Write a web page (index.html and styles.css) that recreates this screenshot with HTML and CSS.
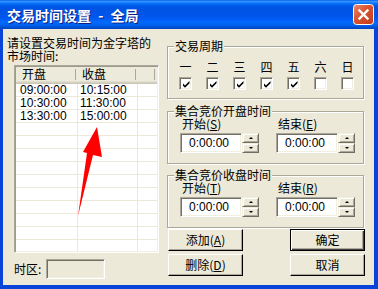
FILE: index.html
```html
<!DOCTYPE html>
<html lang="zh-CN">

<head>
  <meta charset="utf-8">
  <title>交易时间设置 - 全局</title>
  <link rel="stylesheet" href="styles.css">
</head>

<body>
  <div class="window">
    <div class="titlebar">
      <span class="title">交易时间设置 - 全局</span>
      <span class="close">
        <svg width="21" height="21" viewBox="0 0 21 21">
          <defs>
            <linearGradient id="closebg" x1="0" y1="0" x2="1" y2="1">
              <stop offset="0" stop-color="#EA8A70"/>
              <stop offset="0.45" stop-color="#D9532E"/>
              <stop offset="1" stop-color="#C23B1B"/>
            </linearGradient>
          </defs>
          <rect x="0.5" y="0.5" width="20" height="20" rx="3" fill="url(#closebg)" stroke="#fff"/>
          <path d="M6.5 6.5 L14.5 14.5 M14.5 6.5 L6.5 14.5" stroke="#fff" stroke-width="2.4" stroke-linecap="square"/>
        </svg>
      </span>
    </div>

    <div class="dialog">
      <div class="left">
        <p class="intro">请设置交易时间为金字塔的<br>市场时间:</p>

        <div class="list">
          <div class="list-head">
            <span>开盘</span><span>收盘</span><span></span>
          </div>
          <div class="list-body">
            <span>09:00:00</span><span>10:15:00</span><span></span>
            <span>10:30:00</span><span>11:30:00</span><span></span>
            <span>13:30:00</span><span>15:00:00</span><span></span>
            <span></span><span></span><span></span>
            <span></span><span></span><span></span>
            <span></span><span></span><span></span>
            <span></span><span></span><span></span>
            <span></span><span></span><span></span>
            <span></span><span></span><span></span>
            <span></span><span></span><span></span>
            <span></span><span></span><span></span>
            <span></span><span></span><span></span>
            <span></span><span></span><span></span>
          </div>
        </div>

        <div class="zone">
          <span>时区:</span>
          <span class="zone-box"></span>
        </div>
      </div>

      <div class="right">
        <div class="group">
          <div class="group-title">交易周期</div>
          <div class="days">
            <span>一</span><span>二</span><span>三</span><span>四</span><span>五</span><span>六</span><span>日</span>
            <span class="check"><svg width="9" height="9" viewBox="0 0 9 9"><path d="M1 3.5 L3 5.5 L7.5 1 L7.5 3.2 L3 7.7 L1 5.7 Z"/></svg></span>
            <span class="check"><svg width="9" height="9" viewBox="0 0 9 9"><path d="M1 3.5 L3 5.5 L7.5 1 L7.5 3.2 L3 7.7 L1 5.7 Z"/></svg></span>
            <span class="check"><svg width="9" height="9" viewBox="0 0 9 9"><path d="M1 3.5 L3 5.5 L7.5 1 L7.5 3.2 L3 7.7 L1 5.7 Z"/></svg></span>
            <span class="check"><svg width="9" height="9" viewBox="0 0 9 9"><path d="M1 3.5 L3 5.5 L7.5 1 L7.5 3.2 L3 7.7 L1 5.7 Z"/></svg></span>
            <span class="check"><svg width="9" height="9" viewBox="0 0 9 9"><path d="M1 3.5 L3 5.5 L7.5 1 L7.5 3.2 L3 7.7 L1 5.7 Z"/></svg></span>
            <span class="check"></span>
            <span class="check"></span>
          </div>
        </div>

        <div class="group group-time">
          <div class="group-title">集合竞价开盘时间</div>
          <div class="times">
            <div class="field">
              <label>开始(<u>S</u>)</label>
              <div class="spinbox">
                <span class="edit">0:00:00</span>
                <span class="spin"><span><i class="up"></i></span><span><i class="down"></i></span></span>
              </div>
            </div>
            <div class="field">
              <label>结束(<u>E</u>)</label>
              <div class="spinbox">
                <span class="edit">0:00:00</span>
                <span class="spin"><span><i class="up"></i></span><span><i class="down"></i></span></span>
              </div>
            </div>
          </div>
        </div>

        <div class="group group-time group-close">
          <div class="group-title">集合竞价收盘时间</div>
          <div class="times">
            <div class="field">
              <label>开始(<u>T</u>)</label>
              <div class="spinbox">
                <span class="edit">0:00:00</span>
                <span class="spin"><span><i class="up"></i></span><span><i class="down"></i></span></span>
              </div>
            </div>
            <div class="field">
              <label>结束(<u>R</u>)</label>
              <div class="spinbox">
                <span class="edit">0:00:00</span>
                <span class="spin"><span><i class="up"></i></span><span><i class="down"></i></span></span>
              </div>
            </div>
          </div>
        </div>

        <div class="buttons">
          <span class="btn">添加(<u>A</u>)</span>
          <span class="btn default">确定</span>
          <span class="btn">删除(<u>D</u>)</span>
          <span class="btn">取消</span>
        </div>
      </div>
    </div>

    <!-- red pointer drawn over the list -->
    <svg class="arrow" width="378" height="289" viewBox="0 0 378 289">
      <polygon points="97,127 102,157 93,155 78,216 87,153 83,152" fill="#ff0000"/>
    </svg>
  </div>
</body>

</html>
```

FILE: styles.css
```css
* {
  box-sizing: border-box;
}

html,
body {
  margin: 0;
}

body {
  width: 378px;
  height: 289px;
  overflow: hidden;
  font: 12px/14px "Noto Sans CJK SC", sans-serif;
  color: #000;
}

.window {
  position: relative;
  width: 378px;
  height: 289px;
  display: flex;
  flex-direction: column;
  background: #0844D8;
}

.titlebar {
  height: 29px;
  display: flex;
  align-items: center;
  padding: 0 4px 0 7px;
  background: linear-gradient(to bottom, #0058EE 0%, #3593FF 4%, #288EFF 7%, #127DFF 10%, #036FFC 13%, #0262EE 17%, #0057E5 22%, #0054E3 28%, #0055EB 56%, #005BF5 66%, #026AFE 76%, #0062EF 86%, #0052D6 93%, #0046C4 100%);
}

.title {
  color: #fff;
  font-size: 14px;
  font-weight: bold;
  line-height: 16px;
  word-spacing: 4px;
  text-shadow: 1px 1px 0 #0A1E86;
}

.close {
  margin-left: auto;
  width: 21px;
  height: 21px;
  display: block;
}

.close svg {
  display: block;
}

.dialog {
  flex: 1;
  margin: 0 4px 4px 3px;
  background: #ECE9D8;
  display: flex;
}

/* left side */
.left {
  width: 164px;
  padding: 7px 0 0 4px;
}

.intro {
  margin: 0;
  line-height: 13px;
}

.list {
  margin: 3px 0 0 7px;
  width: 145px;
  height: 188px;
  overflow: hidden;
  background: #fff;
  border: 1px solid;
  border-color: #ACA899 #fff #fff #ACA899;
  padding: 1px;
  box-shadow: inset 1px 1px 0 #9D9A8C, inset -1px -1px 0 #F1EFE2;
}

.list-head,
.list-body {
  display: grid;
  grid-template-columns: 62px 60px 1fr;
}

.list-head {
  height: 17px;
  background: #EBEADB;
  box-shadow: inset 0 -1px 0 #CBC7B8, inset 0 -2px 0 #D6D2C2, inset 0 -3px 0 #E2DECD;
}

.list-head span {
  padding-left: 6px;
  line-height: 14px;
  background: linear-gradient(#ACA899, #ACA899) right 2px top 2px / 1px 11px no-repeat;
}

.list-head span:nth-child(2) {
  padding-left: 4px;
}

.list-body span {
  height: 13px;
  padding-left: 4px;
  font: 12px/12px "Liberation Sans", sans-serif;
  border-bottom: 1px solid #ECE9D8;
}

.list-body span:nth-child(3n+1),
.list-body span:nth-child(3n+2) {
  border-right: 1px solid #ECE9D8;
}

.list-body span:nth-child(3n+2) {
  padding-left: 2px;
}

.zone {
  display: flex;
  align-items: center;
  gap: 5px;
  margin: 6px 0 0 7px;
}

.zone-box {
  width: 59px;
  height: 20px;
  border: 1px solid;
  border-color: #ACA899 #fff #fff #ACA899;
  box-shadow: inset 1px 1px 0 #716F64, inset -1px -1px 0 #F1EFE2;
}

/* right side */
.right {
  width: 207px;
  padding-top: 17px;
}

.group {
  width: 197px;
  border: 1px solid #ACA899;
  box-shadow: inset 1px 1px 0 #fff, 1px 1px 0 #fff;
}

.group-title {
  display: table;
  margin: -8px 0 0 6px;
  padding: 0 1px;
  line-height: 14px;
  background: #ECE9D8;
}

.group-time {
  margin-top: 12px;
}

.group-close {
  margin-top: 11px;
}

.days {
  display: grid;
  grid-template-columns: repeat(7, 27px);
  justify-items: center;
  row-gap: 3px;
  padding: 7px 0 8px 4px;
}

.check {
  width: 13px;
  height: 13px;
  display: flex;
  align-items: center;
  justify-content: center;
  background: #fff;
  border: 1px solid;
  border-color: #ACA899 #fff #fff #ACA899;
  box-shadow: inset 1px 1px 0 #716F64, inset -1px -1px 0 #F1EFE2;
}

.check svg {
  display: block;
  margin: 1px 0 0 1px;
}

.times {
  display: flex;
  gap: 17px;
  padding: 0 0 10px 12px;
}

.field label {
  display: block;
  padding-left: 2px;
  line-height: 12px;
  margin-bottom: 3px;
}

.spinbox {
  display: flex;
}

.edit {
  width: 62px;
  height: 20px;
  padding-left: 8px;
  font: 12px/18px "Liberation Sans", sans-serif;
  background: #fff;
  border: 1px solid;
  border-color: #ACA899 #fff #fff #ACA899;
  box-shadow: inset 1px 1px 0 #716F64, inset -1px -1px 0 #F1EFE2;
}

.spin {
  width: 17px;
  display: flex;
  flex-direction: column;
}

.spin span {
  height: 10px;
  display: flex;
  align-items: center;
  justify-content: center;
  background: #ECE9D8;
  border: 1px solid;
  border-color: #F1EFE2 #716F64 #716F64 #F1EFE2;
  box-shadow: inset 1px 1px 0 #fff, inset -1px -1px 0 #ACA899;
}

.up,
.down {
  width: 0;
  height: 0;
  border-left: 2px solid transparent;
  border-right: 2px solid transparent;
}

.up {
  border-bottom: 2px solid #000;
}

.down {
  border-top: 2px solid #000;
}

.buttons {
  display: grid;
  grid-template-columns: 75px 75px;
  column-gap: 47px;
  row-gap: 3px;
  margin-top: 1px;
  padding-left: 1px;
}

.btn {
  height: 22px;
  display: flex;
  align-items: center;
  justify-content: center;
  background: #ECE9D8;
  border: 1px solid;
  border-color: #fff #000 #000 #fff;
  box-shadow: inset -1px -1px 0 #ACA899;
}

.btn.default {
  border-color: #000;
  box-shadow: inset 1px 1px 0 #fff, inset -1px -1px 0 #404040, inset -2px -2px 0 #ACA899;
}

.arrow {
  position: absolute;
  left: 0;
  top: 0;
  pointer-events: none;
}
```
